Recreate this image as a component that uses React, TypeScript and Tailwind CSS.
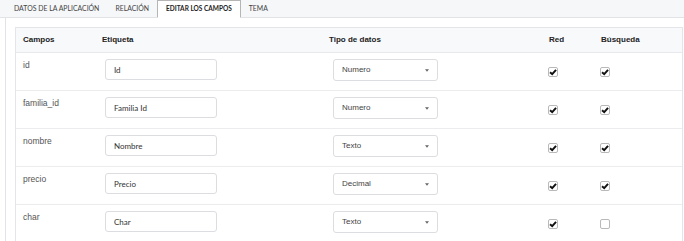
import type { ReactNode } from "react";

type Campo = {
  name: string;
  label: string;
  tipo: string;
  red: boolean;
  busqueda: boolean;
};

const campos: Campo[] = [
  { name: "id", label: "Id", tipo: "Numero", red: true, busqueda: true },
  { name: "familia_id", label: "Familia Id", tipo: "Numero", red: true, busqueda: true },
  { name: "nombre", label: "Nombre", tipo: "Texto", red: true, busqueda: true },
  { name: "precio", label: "Precio", tipo: "Decimal", red: true, busqueda: true },
  { name: "char", label: "Char", tipo: "Texto", red: true, busqueda: false },
];

const tabs = ["DATOS DE LA APLICACIÓN", "RELACIÓN", "EDITAR LOS CAMPOS", "TEMA"];

const cols = "grid grid-cols-[79px_227px_220px_52px_1fr]";

function Checkbox({ checked }: { checked: boolean }) {
  return (
    <span className="flex h-[10px] w-[10px] items-center justify-center rounded-[2px] border border-[#b9b9b9] bg-white">
      {checked && (
        <svg viewBox="0 0 10 10" className="h-[8px] w-[8px]">
          <path d="M1.3 5.3 L4 7.8 L8.8 2.2" fill="none" stroke="#111" strokeWidth="2.4" />
        </svg>
      )}
    </span>
  );
}

function Cell({ children, className = "" }: { children?: ReactNode; className?: string }) {
  return <div className={`pl-[7px] ${className}`}>{children}</div>;
}

export default function App() {
  return (
    <div className="h-[241px] w-[684px] overflow-hidden bg-white font-['Liberation_Sans',Arial,sans-serif]">
      {/* Tabs */}
      <div className="flex h-[18px] border-b border-[#e2e3e6] bg-[#f6f7f9] pl-[6px] font-['Lato',sans-serif] text-[6.9px] text-[#444]">
        {tabs.map((tab, i) =>
          i === 2 ? (
            <div
              key={tab}
              className="-mb-px flex items-center border border-b-white border-[#b5b5b5] bg-white px-[8px] text-[6.5px] font-bold text-[#222]"
            >
              {tab}
            </div>
          ) : (
            <div key={tab} className="flex items-center px-[8px]">
              {tab}
            </div>
          )
        )}
      </div>

      {/* Content */}
      <div className="ml-[5px] h-full border-l border-[#e2e3e6] pl-[9px] pt-[9px]">
        <div className="w-[668px] border border-[#e4e5e8]">
          <div className={`${cols} h-[25px] items-center border-b border-[#e8e9ec] bg-[#f8f9fb] text-[8px] font-bold text-[#222]`}>
            <Cell>Campos</Cell>
            <Cell>Etiqueta</Cell>
            <Cell>Tipo de datos</Cell>
            <Cell>Red</Cell>
            <Cell>Búsqueda</Cell>
          </div>

          {campos.map((c) => (
            <div key={c.name} className={`${cols} h-[38px] border-b border-[#ececee]`}>
              <Cell className="pt-[6px] text-[8.5px] text-[#555]">{c.name}</Cell>
              <Cell className="pt-[6px]">
                <div className="ml-[3px] flex h-[21px] w-[112px] items-center rounded-[3px] border border-[#dcdde0] px-[8px] font-['Lato',sans-serif] text-[8px] text-[#333]">
                  {c.label}
                </div>
              </Cell>
              <Cell className="pt-[6px]">
                <div className="ml-[4px] flex h-[22px] w-[105px] items-center justify-between rounded-[3px] border border-[#dcdde0] pl-[8px] pr-[8px] text-[8px] text-[#444]">
                  <span>{c.tipo}</span>
                  <svg viewBox="0 0 6 4" className="h-[3px] w-[4px]">
                    <path d="M0 0 L6 0 L3 4 Z" fill="#666" />
                  </svg>
                </div>
              </Cell>
              <Cell className="flex items-center">
                <span className="-ml-[1px]">
                  <Checkbox checked={c.red} />
                </span>
              </Cell>
              <Cell className="flex items-center">
                <span className="-ml-[1px]">
                  <Checkbox checked={c.busqueda} />
                </span>
              </Cell>
            </div>
          ))}
        </div>
      </div>
    </div>
  );
}
